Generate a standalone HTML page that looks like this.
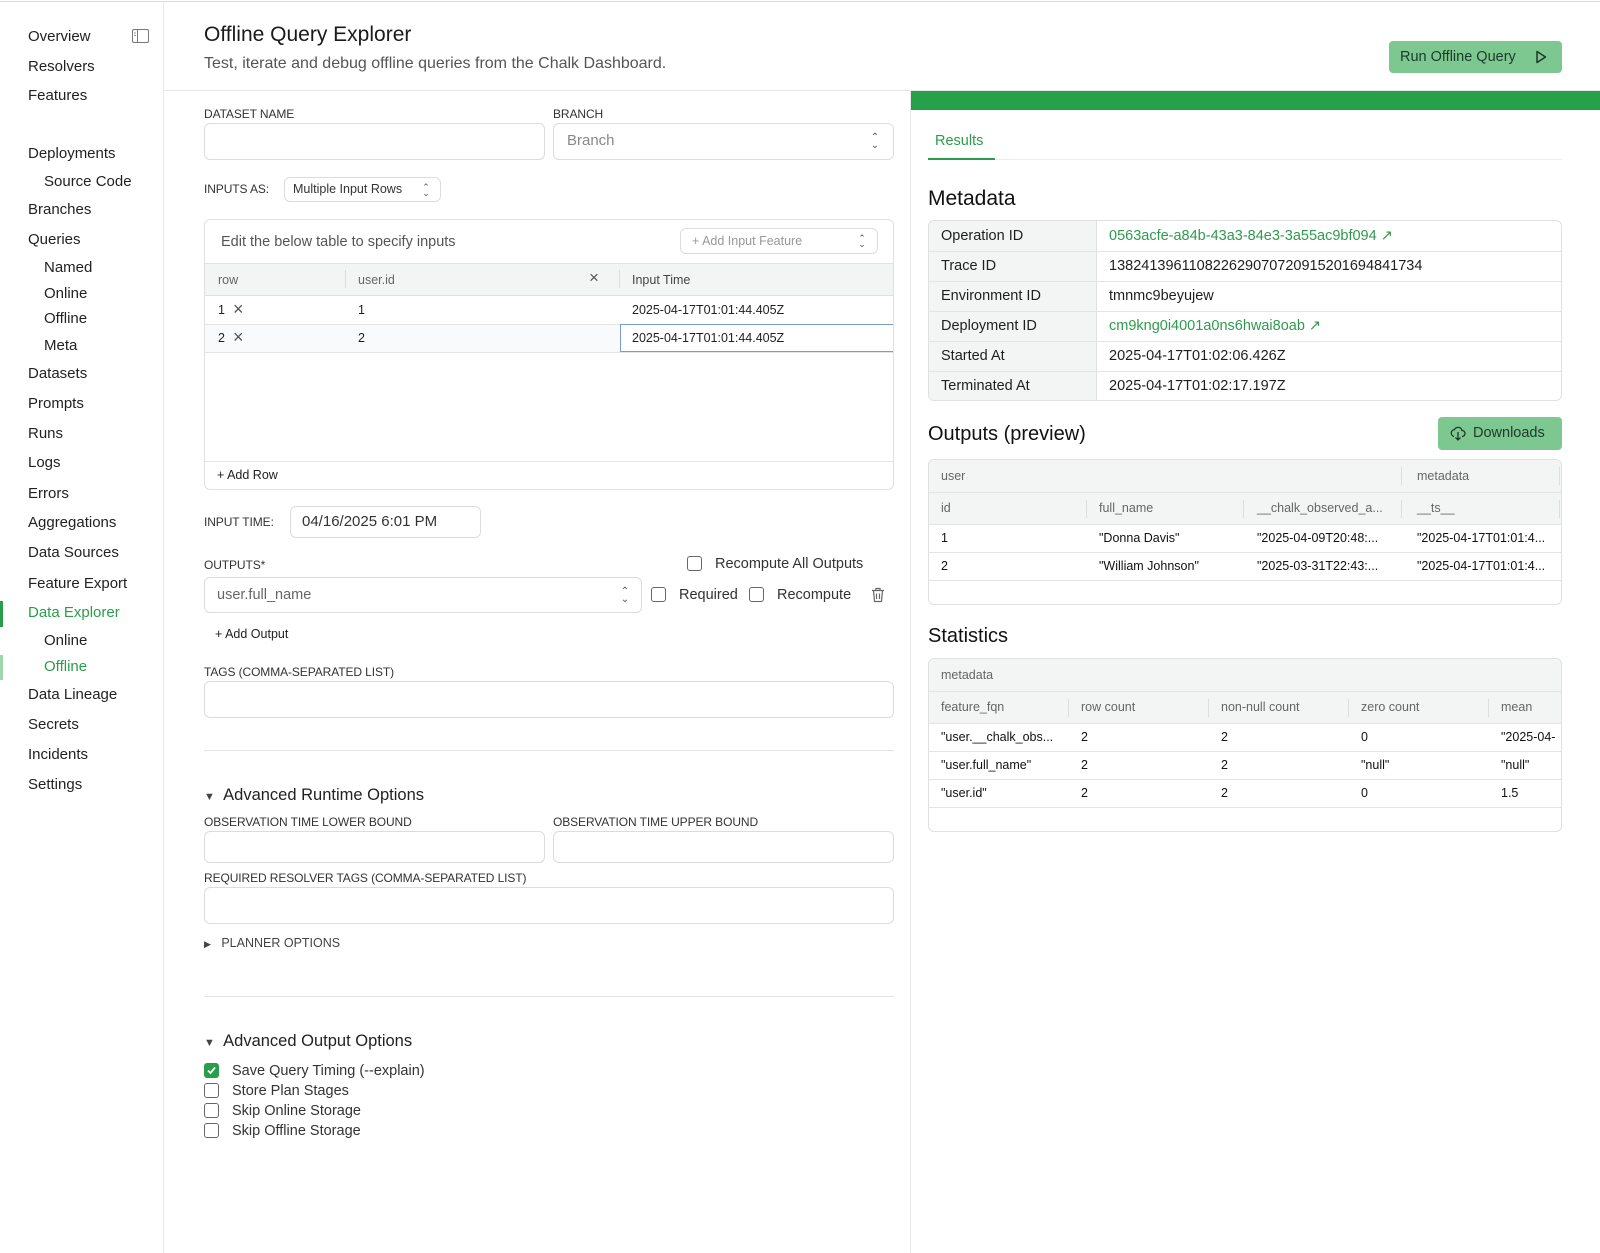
<!DOCTYPE html>
<html><head><meta charset="utf-8"><style>
*{box-sizing:border-box;margin:0;padding:0}
body{width:1600px;height:1253px;position:relative;background:#fff;font-family:"Liberation Sans",sans-serif;color:#1f1f1f;overflow:hidden}
.a{position:absolute;white-space:nowrap}
.nav{position:absolute;left:28px;font-size:15px;line-height:20px;color:#222}
.sub{left:44px}
.lbl{position:absolute;font-size:12px;line-height:14px;color:#333;letter-spacing:-.1px}
.in{position:absolute;border:1px solid #dcdcdc;border-radius:6px;background:#fff}
.t{font-size:12.5px;line-height:16px}
.hline{position:absolute;height:1px;background:#e4e4e4}
.vline{position:absolute;width:1px;background:#e4e4e4}
.cb{position:absolute;width:15px;height:15px;border:1.5px solid #666;border-radius:3px;background:#fff}
.tbl{position:absolute;border:1px solid #e0e0e0;border-radius:6px;overflow:hidden;background:#fff}
.updown{position:absolute;font-size:10px;line-height:8px;color:#555;text-align:center}
</style></head><body>
<div class="hline" style="left:0;top:1px;width:1600px;background:#ddd"></div>
<!-- sidebar -->
<div class="vline" style="left:163px;top:2px;height:1251px;background:#eaeaea"></div>
<div class="nav" style="top:27px">Overview</div>
<svg class="a" style="left:132px;top:29px" width="17" height="14" viewBox="0 0 17 14"><rect x="0.5" y="0.5" width="16" height="13" rx="1.5" fill="none" stroke="#777"/><line x1="5.5" y1="1" x2="5.5" y2="13" stroke="#777"/><line x1="2" y1="4" x2="4" y2="4" stroke="#999"/><line x1="2" y1="6.5" x2="4" y2="6.5" stroke="#999"/></svg>
<div class="nav" style="top:57px">Resolvers</div>
<div class="nav" style="top:86px">Features</div>
<div class="nav" style="top:144px">Deployments</div>
<div class="nav sub" style="top:172px">Source Code</div>
<div class="nav" style="top:200px">Branches</div>
<div class="nav" style="top:230px">Queries</div>
<div class="nav sub" style="top:258px">Named</div>
<div class="nav sub" style="top:284px">Online</div>
<div class="nav sub" style="top:309px">Offline</div>
<div class="nav sub" style="top:336px">Meta</div>
<div class="nav" style="top:364px">Datasets</div>
<div class="nav" style="top:394px">Prompts</div>
<div class="nav" style="top:424px">Runs</div>
<div class="nav" style="top:453px">Logs</div>
<div class="nav" style="top:484px">Errors</div>
<div class="nav" style="top:513px">Aggregations</div>
<div class="nav" style="top:543px">Data Sources</div>
<div class="nav" style="top:574px">Feature Export</div>
<div class="a" style="left:0;top:601px;width:3px;height:26px;background:#2a9d4a"></div>
<div class="nav" style="top:603px;color:#2a9d4a">Data Explorer</div>
<div class="nav sub" style="top:631px">Online</div>
<div class="a" style="left:0;top:655px;width:3px;height:25px;background:#9fd6ae"></div>
<div class="nav sub" style="top:657px;color:#2a9d4a">Offline</div>
<div class="nav" style="top:685px">Data Lineage</div>
<div class="nav" style="top:715px">Secrets</div>
<div class="nav" style="top:745px">Incidents</div>
<div class="nav" style="top:775px">Settings</div>
<!-- header -->
<div class="a" style="left:204px;top:22px;font-size:21px;line-height:26px;color:#1a1a1a">Offline Query Explorer</div>
<div class="a" style="left:204px;top:54px;font-size:16px;line-height:20px;color:#555">Test, iterate and debug offline queries from the Chalk Dashboard.</div>
<div class="a" style="left:1389px;top:41px;width:173px;height:32px;background:#7dc791;border-radius:4px;font-size:14.5px;line-height:32px;color:#1e3a28;padding-left:11px">Run Offline Query</div>
<svg class="a" style="left:1535px;top:50px" width="12" height="14" viewBox="0 0 12 14"><path d="M2 1.5 L10.5 7 L2 12.5 Z" fill="none" stroke="#1e3a28" stroke-width="1.5" stroke-linejoin="round"/></svg>
<div class="hline" style="left:163px;top:90px;width:1437px;background:#e6e6e6"></div>
<!-- right panel -->
<div class="vline" style="left:910px;top:91px;height:1162px;background:#e6e6e6"></div>
<div class="a" style="left:911px;top:91px;width:689px;height:19px;background:#27a04a"></div>
<div class="a" style="left:935px;top:132px;font-size:14.5px;line-height:18px;color:#2a9d4a">Results</div>
<div class="hline" style="left:928px;top:159px;width:634px;background:#eee"></div>
<div class="a" style="left:928px;top:158px;width:67px;height:2px;background:#2a9d4a"></div>
<div class="a" style="left:928px;top:186px;font-size:21px;line-height:26px;color:#111">Metadata</div>
<div class="tbl" style="left:928px;top:220px;width:634px;height:181px">
 <div class="a" style="left:0;top:0;width:168px;height:181px;background:#f3f4f4;border-right:1px solid #e0e0e0"></div>
 <div class="hline" style="left:0;top:30px;width:634px"></div><div class="hline" style="left:0;top:60px;width:634px"></div><div class="hline" style="left:0;top:90px;width:634px"></div><div class="hline" style="left:0;top:120px;width:634px"></div><div class="hline" style="left:0;top:150px;width:634px"></div>
 <div class="a" style="left:12px;top:6px;font-size:14.5px;line-height:18px">Operation ID</div>
 <div class="a" style="left:12px;top:36px;font-size:14.5px;line-height:18px">Trace ID</div>
 <div class="a" style="left:12px;top:66px;font-size:14.5px;line-height:18px">Environment ID</div>
 <div class="a" style="left:12px;top:96px;font-size:14.5px;line-height:18px">Deployment ID</div>
 <div class="a" style="left:12px;top:126px;font-size:14.5px;line-height:18px">Started At</div>
 <div class="a" style="left:12px;top:156px;font-size:14.5px;line-height:18px">Terminated At</div>
 <div class="a" style="left:180px;top:6px;font-size:14.5px;line-height:18px;color:#2f9a4f">0563acfe-a84b-43a3-84e3-3a55ac9bf094 ↗</div>
 <div class="a" style="left:180px;top:36px;font-size:14.5px;line-height:18px">138241396110822629070720915201694841734</div>
 <div class="a" style="left:180px;top:66px;font-size:14.5px;line-height:18px">tmnmc9beyujew</div>
 <div class="a" style="left:180px;top:96px;font-size:14.5px;line-height:18px;color:#2f9a4f">cm9kng0i4001a0ns6hwai8oab ↗</div>
 <div class="a" style="left:180px;top:126px;font-size:14.5px;line-height:18px">2025-04-17T01:02:06.426Z</div>
 <div class="a" style="left:180px;top:156px;font-size:14.5px;line-height:18px">2025-04-17T01:02:17.197Z</div>
</div>
<div class="a" style="left:928px;top:421px;font-size:20px;line-height:26px;color:#111">Outputs (preview)</div>
<div class="a" style="left:1438px;top:417px;width:124px;height:33px;background:#7dc791;border-radius:4px;font-size:14.5px;line-height:33px;color:#1e3a28;padding-left:35px">Downloads</div>
<svg class="a" style="left:1450px;top:426px" width="16" height="15" viewBox="0 0 16 15"><path d="M4 10.5 A3.5 3.5 0 0 1 4.5 3.6 A4 4 0 0 1 12 4.5 A3 3 0 0 1 12 10.5" fill="none" stroke="#1e3a28" stroke-width="1.3"/><path d="M8 6v8 M5.5 11.5 L8 14 L10.5 11.5" fill="none" stroke="#1e3a28" stroke-width="1.3"/></svg>
<div class="tbl t" style="left:928px;top:459px;width:634px;height:146px;color:#666">
 <div class="a" style="left:0;top:0;width:634px;height:64px;background:#f3f4f4"></div>
 <div class="hline" style="left:0;top:32px;width:634px"></div><div class="hline" style="left:0;top:64px;width:634px"></div><div class="hline" style="left:0;top:92px;width:634px"></div><div class="hline" style="left:0;top:120px;width:634px"></div>
 <div class="vline" style="left:472px;top:7px;height:18px;background:#ddd"></div><div class="vline" style="left:630px;top:7px;height:18px;background:#ddd"></div>
 <div class="vline" style="left:157px;top:40px;height:18px;background:#ddd"></div><div class="vline" style="left:314px;top:40px;height:18px;background:#ddd"></div><div class="vline" style="left:472px;top:40px;height:18px;background:#ddd"></div><div class="vline" style="left:630px;top:40px;height:18px;background:#ddd"></div>
 <div class="a" style="left:12px;top:8px">user</div><div class="a" style="left:488px;top:8px">metadata</div>
 <div class="a" style="left:12px;top:40px">id</div><div class="a" style="left:170px;top:40px">full_name</div><div class="a" style="left:328px;top:40px">__chalk_observed_a...</div><div class="a" style="left:488px;top:40px">__ts__</div>
 <div style="color:#111">
 <div class="a" style="left:12px;top:70px">1</div><div class="a" style="left:170px;top:70px">"Donna Davis"</div><div class="a" style="left:328px;top:70px">"2025-04-09T20:48:...</div><div class="a" style="left:488px;top:70px">"2025-04-17T01:01:4...</div>
 <div class="a" style="left:12px;top:98px">2</div><div class="a" style="left:170px;top:98px">"William Johnson"</div><div class="a" style="left:328px;top:98px">"2025-03-31T22:43:...</div><div class="a" style="left:488px;top:98px">"2025-04-17T01:01:4...</div>
 </div>
</div>
<div class="a" style="left:928px;top:623px;font-size:20px;line-height:26px;color:#111">Statistics</div>
<div class="tbl t" style="left:928px;top:658px;width:634px;height:174px;color:#666">
 <div class="a" style="left:0;top:0;width:634px;height:64px;background:#f3f4f4"></div>
 <div class="hline" style="left:0;top:32px;width:634px"></div><div class="hline" style="left:0;top:64px;width:634px"></div><div class="hline" style="left:0;top:92px;width:634px"></div><div class="hline" style="left:0;top:120px;width:634px"></div><div class="hline" style="left:0;top:148px;width:634px"></div>
 <div class="vline" style="left:139px;top:40px;height:18px;background:#ddd"></div><div class="vline" style="left:279px;top:40px;height:18px;background:#ddd"></div><div class="vline" style="left:419px;top:40px;height:18px;background:#ddd"></div><div class="vline" style="left:559px;top:40px;height:18px;background:#ddd"></div>
 <div class="a" style="left:12px;top:8px">metadata</div>
 <div class="a" style="left:12px;top:40px">feature_fqn</div><div class="a" style="left:152px;top:40px">row count</div><div class="a" style="left:292px;top:40px">non-null count</div><div class="a" style="left:432px;top:40px">zero count</div><div class="a" style="left:572px;top:40px">mean</div>
 <div style="color:#111">
 <div class="a" style="left:12px;top:70px">"user.__chalk_obs...</div><div class="a" style="left:152px;top:70px">2</div><div class="a" style="left:292px;top:70px">2</div><div class="a" style="left:432px;top:70px">0</div><div class="a" style="left:572px;top:70px">"2025-04-</div>
 <div class="a" style="left:12px;top:98px">"user.full_name"</div><div class="a" style="left:152px;top:98px">2</div><div class="a" style="left:292px;top:98px">2</div><div class="a" style="left:432px;top:98px">"null"</div><div class="a" style="left:572px;top:98px">"null"</div>
 <div class="a" style="left:12px;top:126px">"user.id"</div><div class="a" style="left:152px;top:126px">2</div><div class="a" style="left:292px;top:126px">2</div><div class="a" style="left:432px;top:126px">0</div><div class="a" style="left:572px;top:126px">1.5</div>
 </div>
</div>
<!-- form -->
<div class="lbl" style="left:204px;top:107px">DATASET NAME</div>
<div class="lbl" style="left:553px;top:107px">BRANCH</div>
<div class="in" style="left:204px;top:123px;width:341px;height:37px"></div>
<div class="in" style="left:553px;top:123px;width:341px;height:37px"></div>
<div class="a" style="left:567px;top:132px;font-size:15px;line-height:18px;color:#888">Branch</div>
<div class="updown" style="left:870px;top:134px;width:10px">⌃<br>⌄</div>
<div class="lbl" style="left:204px;top:182px">INPUTS AS:</div>
<div class="in" style="left:284px;top:177px;width:157px;height:25px"></div>
<div class="a" style="left:293px;top:182px;font-size:12.5px;line-height:15px;color:#333">Multiple Input Rows</div>
<div class="updown" style="left:421px;top:184px;width:10px;font-size:9px;line-height:6px">⌃<br>⌄</div>
<div class="tbl" style="left:204px;top:219px;width:690px;height:271px">
 <div class="a" style="left:16px;top:13px;font-size:14.5px;line-height:18px;color:#555">Edit the below table to specify inputs</div>
 <div class="in" style="left:475px;top:8px;width:198px;height:26px"></div>
 <div class="a" style="left:487px;top:13px;font-size:12.5px;line-height:16px;color:#999">+ Add Input Feature</div>
 <div class="updown" style="left:652px;top:15px;width:10px;font-size:9px;line-height:6px">⌃<br>⌄</div>
 <div class="a" style="left:0;top:43px;width:690px;height:33px;background:#f3f4f4;border-top:1px solid #e0e0e0;border-bottom:1px solid #e0e0e0"></div>
 <div class="vline" style="left:140px;top:50px;height:18px;background:#ddd"></div><div class="vline" style="left:414px;top:50px;height:18px;background:#ddd"></div>
 <div class="a t" style="left:13px;top:52px;color:#666">row</div>
 <div class="a t" style="left:153px;top:52px;color:#666">user.id</div>
 <div class="a" style="left:384px;top:48px;font-size:17px;line-height:20px;color:#555">×</div>
 <div class="a t" style="left:427px;top:52px;color:#444">Input Time</div>
 <div class="hline" style="left:0;top:104px;width:690px"></div>
 <div class="a" style="left:0;top:105px;width:690px;height:27px;background:#f9fafb"></div>
 <div class="hline" style="left:0;top:132px;width:690px"></div>
 <div class="a t" style="left:13px;top:82px">1</div><div class="a" style="left:28px;top:78px;font-size:18px;line-height:22px;color:#555">×</div><div class="a t" style="left:153px;top:82px">1</div><div class="a t" style="left:427px;top:82px">2025-04-17T01:01:44.405Z</div>
 <div class="a t" style="left:13px;top:110px">2</div><div class="a" style="left:28px;top:106px;font-size:18px;line-height:22px;color:#555">×</div><div class="a t" style="left:153px;top:110px">2</div>
 <div class="a" style="left:415px;top:104px;width:274px;height:28px;border:1.5px solid #7b9bc8;background:#fff"></div>
 <div class="a t" style="left:427px;top:110px">2025-04-17T01:01:44.405Z</div>
 <div class="hline" style="left:0;top:241px;width:690px"></div>
 <div class="a t" style="left:12px;top:247px;color:#222">+ Add Row</div>
</div>
<div class="lbl" style="left:204px;top:515px">INPUT TIME:</div>
<div class="in" style="left:290px;top:506px;width:191px;height:32px"></div>
<div class="a" style="left:302px;top:513px;font-size:15px;line-height:18px;color:#333">04/16/2025 6:01 PM</div>
<div class="lbl" style="left:204px;top:558px">OUTPUTS*</div>
<div class="cb" style="left:687px;top:556px"></div>
<div class="a" style="left:715px;top:555px;font-size:14.5px;line-height:18px;color:#333">Recompute All Outputs</div>
<div class="in" style="left:204px;top:577px;width:438px;height:36px"></div>
<div class="a" style="left:217px;top:586px;font-size:14.5px;line-height:18px;color:#666">user.full_name</div>
<div class="updown" style="left:620px;top:588px;width:10px">⌃<br>⌄</div>
<div class="cb" style="left:651px;top:587px"></div>
<div class="a" style="left:679px;top:586px;font-size:14.5px;line-height:18px;color:#333">Required</div>
<div class="cb" style="left:749px;top:587px"></div>
<div class="a" style="left:777px;top:586px;font-size:14.5px;line-height:18px;color:#333">Recompute</div>
<svg class="a" style="left:871px;top:587px" width="14" height="16" viewBox="0 0 14 16"><path d="M1 3.5h12 M5 3.5V1.5h4v2 M2.5 3.5l1 11h7l1-11 M5.5 6.5v5.5 M8.5 6.5v5.5" fill="none" stroke="#666" stroke-width="1.2"/></svg>
<div class="a t" style="left:215px;top:626px;color:#222">+ Add Output</div>
<div class="lbl" style="left:204px;top:665px">TAGS (COMMA-SEPARATED LIST)</div>
<div class="in" style="left:204px;top:681px;width:690px;height:37px"></div>
<div class="hline" style="left:204px;top:750px;width:690px"></div>
<div class="a" style="left:204px;top:785px;font-size:16.5px;line-height:20px;color:#222"><span style="font-size:11px;color:#444">▼</span>&nbsp; Advanced Runtime Options</div>
<div class="lbl" style="left:204px;top:815px">OBSERVATION TIME LOWER BOUND</div>
<div class="lbl" style="left:553px;top:815px">OBSERVATION TIME UPPER BOUND</div>
<div class="in" style="left:204px;top:831px;width:341px;height:32px"></div>
<div class="in" style="left:553px;top:831px;width:341px;height:32px"></div>
<div class="lbl" style="left:204px;top:871px">REQUIRED RESOLVER TAGS (COMMA-SEPARATED LIST)</div>
<div class="in" style="left:204px;top:887px;width:690px;height:37px"></div>
<div class="a" style="left:204px;top:936px;font-size:12.5px;line-height:15px;color:#444"><span style="font-size:9px">▶</span>&nbsp;&nbsp; PLANNER OPTIONS</div>
<div class="hline" style="left:204px;top:996px;width:690px"></div>
<div class="a" style="left:204px;top:1031px;font-size:16.5px;line-height:20px;color:#222"><span style="font-size:11px;color:#444">▼</span>&nbsp; Advanced Output Options</div>
<div class="cb" style="left:204px;top:1063px;background:#2a9d4a;border-color:#2a9d4a"></div>
<svg class="a" style="left:206px;top:1065px" width="11" height="11" viewBox="0 0 11 11"><path d="M2 5.5 L4.5 8 L9 2.5" fill="none" stroke="#fff" stroke-width="1.8"/></svg>
<div class="a" style="left:232px;top:1062px;font-size:14.5px;line-height:18px;color:#333">Save Query Timing (--explain)</div>
<div class="cb" style="left:204px;top:1083px"></div>
<div class="a" style="left:232px;top:1082px;font-size:14.5px;line-height:18px;color:#333">Store Plan Stages</div>
<div class="cb" style="left:204px;top:1103px"></div>
<div class="a" style="left:232px;top:1102px;font-size:14.5px;line-height:18px;color:#333">Skip Online Storage</div>
<div class="cb" style="left:204px;top:1123px"></div>
<div class="a" style="left:232px;top:1122px;font-size:14.5px;line-height:18px;color:#333">Skip Offline Storage</div>
</body></html>
